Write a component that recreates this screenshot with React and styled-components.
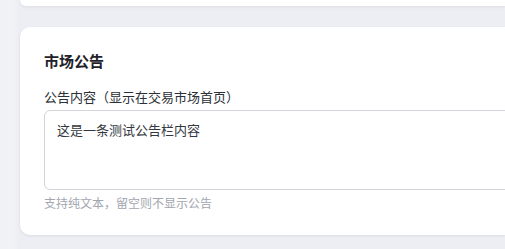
import styled, { createGlobalStyle } from 'styled-components';

const GlobalStyle = createGlobalStyle`
  html, body {
    margin: 0;
    padding: 0;
    background: #eceef3;
    font-family: "Noto Sans CJK SC", "Noto Sans", sans-serif;
  }
`;

const Page = styled.div`
  display: flex;
  flex-direction: column;
  gap: 21px;
  padding-left: 20px;
  min-height: 249px;
  background: linear-gradient(to right, #f1f2f5 0, #f1f2f5 14px, #eceef3 19px);
`;

const TopCard = styled.div`
  height: 6px;
  background: #fff;
  border-radius: 0 0 0 10px;
  box-shadow: 0 1px 3px rgba(20, 30, 50, 0.08);
`;

const Card = styled.section`
  background: #fff;
  border-radius: 10px 0 0 10px;
  padding: 24px 0 23px 24px;
  box-shadow: 0 1px 3px rgba(20, 30, 50, 0.08);
`;

const Title = styled.h3`
  margin: 0;
  font-size: 15px;
  line-height: 20px;
  font-weight: 700;
  color: #1f2329;
`;

const Label = styled.label`
  display: block;
  margin-top: 17px;
  font-size: 13px;
  line-height: 18px;
  color: #2b2f36;
`;

const TextArea = styled.textarea`
  display: block;
  box-sizing: border-box;
  margin-top: 4px;
  width: 480px;
  height: 80px;
  padding: 9px 12px;
  border: 1px solid #d3d5db;
  border-radius: 6px;
  font-family: inherit;
  font-size: 13px;
  line-height: 20px;
  color: #333840;
  resize: none;
  outline: none;
`;

const Hint = styled.p`
  margin: 4px 0 0;
  font-size: 12px;
  line-height: 18px;
  color: #a2a6ae;
`;

export default function App() {
  return (
    <>
      <GlobalStyle />
      <Page>
        <TopCard />
        <Card>
          <Title>市场公告</Title>
          <Label>公告内容（显示在交易市场首页）</Label>
          <TextArea defaultValue="这是一条测试公告栏内容" spellCheck={false} />
          <Hint>支持纯文本，留空则不显示公告</Hint>
        </Card>
      </Page>
    </>
  );
}
